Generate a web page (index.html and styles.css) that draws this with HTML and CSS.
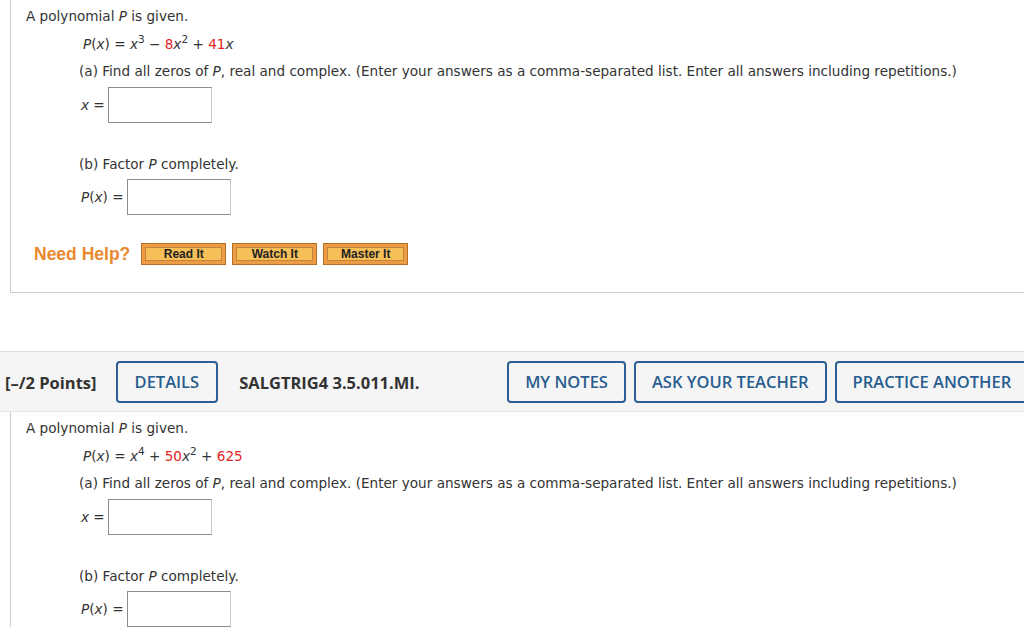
FILE: index.html
```html
<!DOCTYPE html>
<html lang="en">
<head>
  <meta charset="UTF-8" />
  <title>Polynomial zeros</title>
  <link rel="stylesheet" href="styles.css">
</head>
<body>
  <div class="question">
    <p class="intro">A polynomial <i>P</i> is given.</p>
    <div class="indent">
      <p class="eq"><i>P</i>(<i>x</i>) = <i>x</i><sup>3</sup> &minus; <span class="red">8</span><i>x</i><sup>2</sup> + <span class="red">41</span><i>x</i></p>
      <p class="part">(a) Find all zeros of <i>P</i>, real and complex. (Enter your answers as a comma-separated list. Enter all answers including repetitions.)</p>
      <div class="answer">
        <span class="lbl"><i>x</i> =</span>
        <input type="text" class="box" />
      </div>
      <p class="part part-b">(b) Factor <i>P</i> completely.</p>
      <div class="answer answer-b">
        <span class="lbl"><i>P</i>(<i>x</i>) =</span>
        <input type="text" class="box" />
      </div>
    </div>
    <div class="help">
      <span class="help-title">Need Help?</span>
      <a class="hbtn" href="#">Read It</a>
      <a class="hbtn" href="#">Watch It</a>
      <a class="hbtn" href="#">Master It</a>
    </div>
  </div>

  <div class="qhead">
    <span class="points">[&ndash;/2 Points]</span>
    <a class="obtn" href="#">DETAILS</a>
    <span class="qid">SALGTRIG4 3.5.011.MI.</span>
    <a class="obtn" href="#">MY NOTES</a>
    <a class="obtn" href="#">ASK YOUR TEACHER</a>
    <a class="obtn" href="#">PRACTICE ANOTHER</a>
  </div>

  <div class="question">
    <p class="intro">A polynomial <i>P</i> is given.</p>
    <div class="indent">
      <p class="eq"><i>P</i>(<i>x</i>) = <i>x</i><sup>4</sup> + <span class="red">50</span><i>x</i><sup>2</sup> + <span class="red">625</span></p>
      <p class="part">(a) Find all zeros of <i>P</i>, real and complex. (Enter your answers as a comma-separated list. Enter all answers including repetitions.)</p>
      <div class="answer">
        <span class="lbl"><i>x</i> =</span>
        <input type="text" class="box" />
      </div>
      <p class="part part-b">(b) Factor <i>P</i> completely.</p>
      <div class="answer answer-b">
        <span class="lbl"><i>P</i>(<i>x</i>) =</span>
        <input type="text" class="box" />
      </div>
    </div>
  </div>
</body>
</html>
```

FILE: styles.css
```css
body {
  margin: 0;
  font-family: "DejaVu Sans", Verdana, sans-serif;
  font-size: 13.6px;
  color: #333;
  background: #fff;
  overflow: hidden;
}
p {
  margin: 0;
  line-height: 16px;
}
.question {
  margin-left: 10px;
  border-left: 1px solid #ccc;
  padding: 8px 0 0 15px;
}
.question:first-child {
  border-bottom: 1px solid #ccc;
  padding-bottom: 27px;
}
.indent {
  padding-left: 53px;
}
.eq {
  margin-top: 12px;
  padding-left: 4px;
}
.part {
  margin-top: 11px;
}
.part-b {
  margin-top: 33px;
}
.red {
  color: #e3261f;
}
sup {
  font-size: 10.5px;
  line-height: 0;
}
.answer {
  display: flex;
  align-items: center;
  margin-top: 8px;
  padding-left: 2px;
}
.answer-b {
  margin-top: 7px;
}
.lbl {
  margin-right: 3px;
}
.box {
  width: 104px;
  height: 36px;
  box-sizing: border-box;
  border: 1px solid #8c8c8c;
  border-right-color: #c8c8c8;
  margin: 0;
  padding: 0;
}
.help {
  display: flex;
  align-items: center;
  margin-top: 28px;
  margin-left: 8px;
}
.help-title {
  font-family: "Liberation Sans", Arial, sans-serif;
  font-weight: bold;
  font-size: 17.5px;
  color: #e8892f;
  margin-right: 11px;
}
.hbtn {
  display: inline-block;
  width: 85px;
  height: 22px;
  line-height: 20px;
  box-sizing: border-box;
  margin-right: 6px;
  text-align: center;
  font-family: "Liberation Sans", Arial, sans-serif;
  font-weight: bold;
  font-size: 12px;
  color: #222;
  text-decoration: none;
  background: #f6bf58;
  border: 1px solid #b46e2a;
  box-shadow: inset 0 0 0 3px #eb9c45, inset 0 0 0 4px #c6823a;
}
.qhead {
  display: flex;
  align-items: center;
  gap: 8px;
  margin-top: 58px;
  padding: 9px 0 8px 5px;
  background: #f5f5f5;
  border-top: 1px solid #dedede;
  border-bottom: 1px solid #e4e4e4;
  font-family: "Open Sans", sans-serif;
  font-size: 16.5px;
  white-space: nowrap;
}
.points {
  font-weight: bold;
  color: #333;
  margin-right: 11px;
}
.qid {
  flex: 0 0 260px;
  margin-left: 13px;
  font-weight: bold;
  color: #333;
}
.obtn {
  flex: none;
  display: inline-block;
  height: 42px;
  line-height: 38px;
  box-sizing: border-box;
  padding: 0 16px;
  border: 2px solid #2c6095;
  border-radius: 4px;
  color: #2a5d8f;
  font-weight: 600;
  text-decoration: none;
}
.obtn:first-of-type {
  padding: 0 17px;
}
```
